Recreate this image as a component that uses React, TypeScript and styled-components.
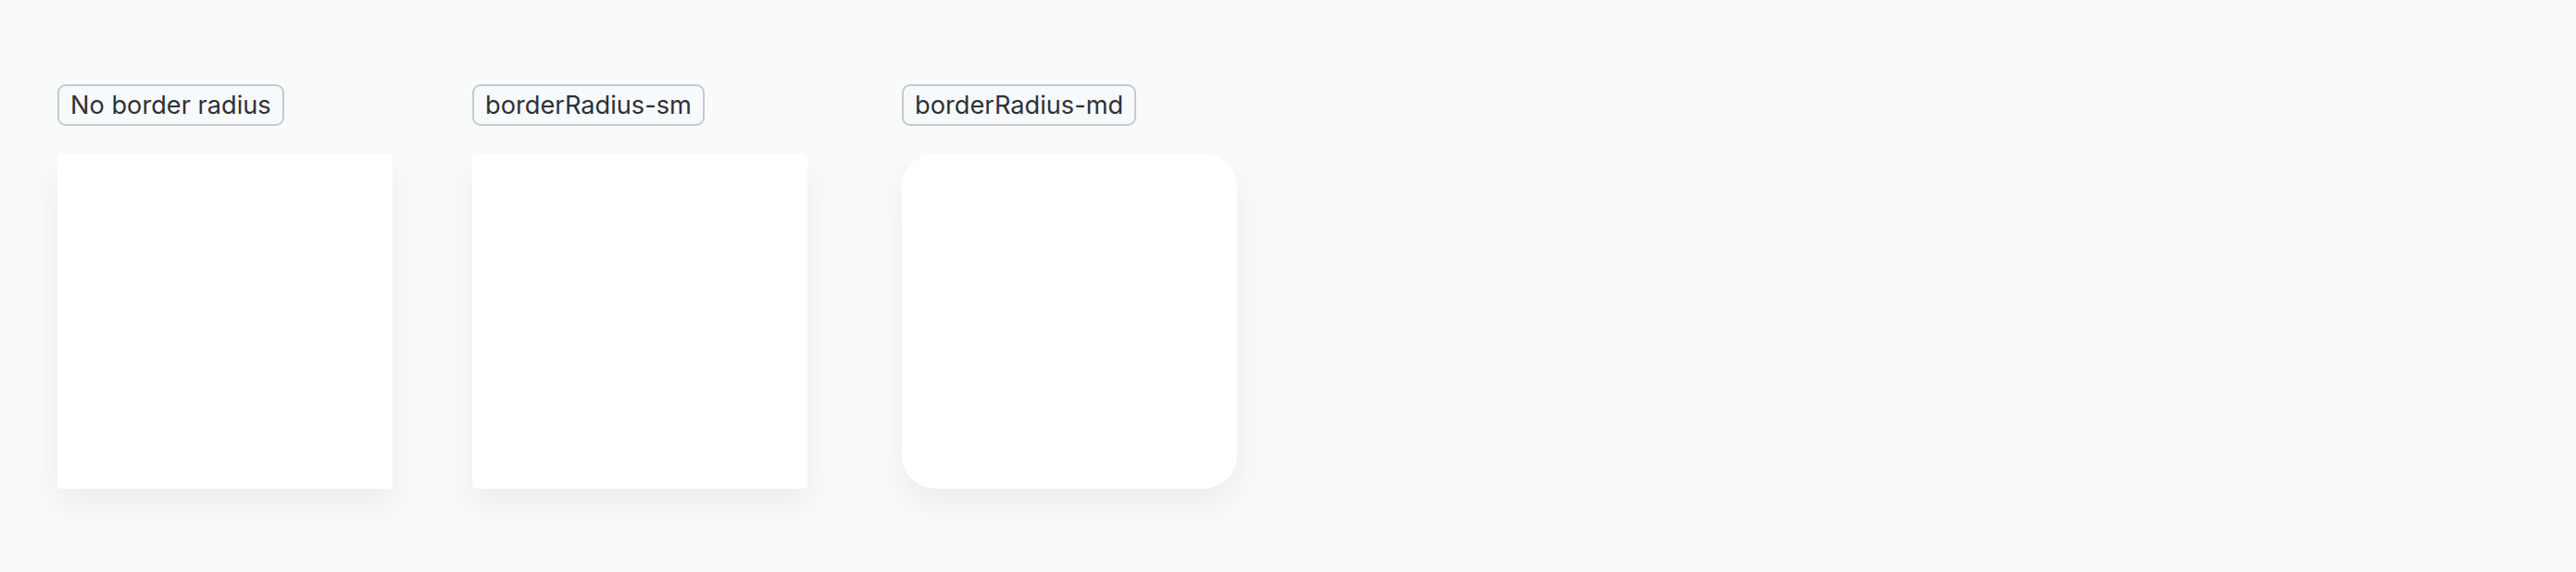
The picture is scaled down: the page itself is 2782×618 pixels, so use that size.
import React from 'react';
import styled, { createGlobalStyle } from 'styled-components';

const GlobalStyle = createGlobalStyle`
  html, body {
    margin: 0;
    padding: 0;
    background: #f9fafa;
    font-family: Inter, "Noto Sans", sans-serif;
  }
`;

const Page = styled.div`
  display: flex;
  align-items: flex-start;
  padding: 91px 0 0 62px;
  min-height: 618px;
  box-sizing: border-box;
`;

const Column = styled.div<{ $after: number }>`
  display: flex;
  flex-direction: column;
  align-items: flex-start;
  gap: 30px;
  margin-right: ${(p) => p.$after}px;
`;

const Tag = styled.span`
  display: inline-block;
  padding: 2px 12px;
  border: 2px solid #c5cad2;
  border-radius: 9px;
  background: #f8f9fa;
  color: #2d3137;
  font-size: 27.2px;
  font-weight: 400;
  line-height: 37px;
  white-space: nowrap;
`;

const Swatch = styled.div<{ $radius: number }>`
  width: 362px;
  height: 362px;
  background: #ffffff;
  border-radius: ${(p) => p.$radius}px;
  box-shadow: 0 18px 36px rgba(0, 0, 0, 0.06);
`;

const samples = [
  { label: 'No border radius', radius: 0, after: 86 },
  { label: 'borderRadius-sm', radius: 5, after: 102 },
  { label: 'borderRadius-md', radius: 36, after: 0 },
];

export default function App() {
  return (
    <>
      <GlobalStyle />
      <Page>
        {samples.map((s) => (
          <Column key={s.label} $after={s.after}>
            <Tag>{s.label}</Tag>
            <Swatch $radius={s.radius} />
          </Column>
        ))}
      </Page>
    </>
  );
}
